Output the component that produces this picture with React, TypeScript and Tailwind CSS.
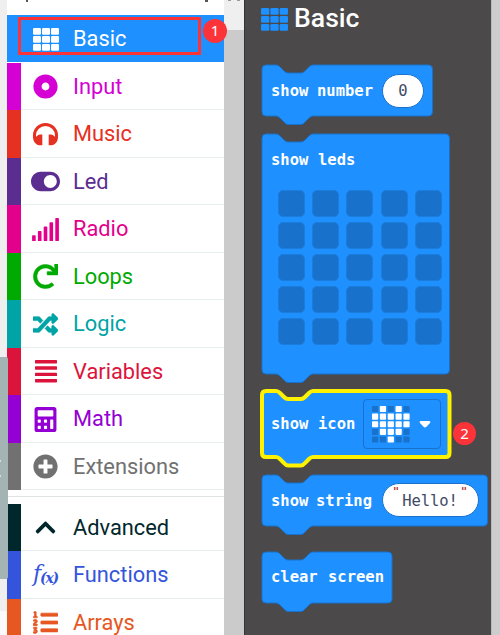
import React from "react";
import {
  FaDotCircle, FaToggleOn, FaSignal, FaRedo, FaRandom,
  FaCalculator, FaPlusCircle, FaChevronUp, FaListOl,
} from "react-icons/fa";

const mono = "font-['DejaVu_Sans_Mono',monospace]";

function GridIcon({ width, height }: { width: number; height: number }) {
  return (
    <svg width={width} height={height} viewBox="0 0 26 23" preserveAspectRatio="none" fill="currentColor">
      {[0, 1, 2].map((r) => [0, 1, 2].map((c) => (
        <rect key={`${r}${c}`} x={c * 9} y={r * 8} width="8" height="6.8" rx="1.2" />
      )))}
    </svg>
  );
}

function HeadphonesIcon() {
  return (
    <svg width="25" height="23" viewBox="0 0 25 23">
      <path d="M1.5 15V12.2a11 10.7 0 0 1 22 0V15" fill="none" stroke="currentColor" strokeWidth="3" />
      <path d="M9.3 11.5V22.3H7.5C4 22.3 1.2 20 .3 16.5L0 13.5H3.5Q5 11.5 7 11.5ZM15.7 11.5V22.3H17.5C21 22.3 23.8 20 24.7 16.5L25 13.5H21.5Q20 11.5 18 11.5Z" fill="currentColor" />
    </svg>
  );
}

function LinesIcon() {
  return (
    <svg width="22" height="23" viewBox="0 0 22 23" fill="currentColor">
      {[0, 6.3, 12.7, 19].map((y) => <rect key={y} y={y} width="22" height="3.4" rx="0.6" />)}
    </svg>
  );
}

function FunctionIcon() {
  return (
    <span className="relative -top-px block whitespace-nowrap font-['DejaVu_Serif',serif] italic leading-none tracking-[-1.2px]">
      <span className="text-[22px]">f</span>
      <span className="relative top-[2px] text-[14px] font-bold">(x)</span>
    </span>
  );
}

type Category = { label: string; text: string; bar: string; icon: React.ReactNode };

const categories: Category[] = [
  { label: "Input", text: "text-[#d400d4]", bar: "bg-[#d400d4]", icon: <FaDotCircle size={25} /> },
  { label: "Music", text: "text-[#e63022]", bar: "bg-[#e63022]", icon: <HeadphonesIcon /> },
  { label: "Led", text: "text-[#5c2d91]", bar: "bg-[#5c2d91]", icon: <FaToggleOn size={29} /> },
  { label: "Radio", text: "text-[#e3008c]", bar: "bg-[#e3008c]", icon: <FaSignal size={29} /> },
  { label: "Loops", text: "text-[#00aa00]", bar: "bg-[#00aa00]", icon: <FaRedo size={25} stroke="currentColor" strokeWidth={10} /> },
  { label: "Logic", text: "text-[#00a4a6]", bar: "bg-[#00a4a6]", icon: <FaRandom size={25} stroke="currentColor" strokeWidth={12} /> },
  { label: "Variables", text: "text-[#dc143c]", bar: "bg-[#dc143c]", icon: <LinesIcon /> },
  { label: "Math", text: "text-[#9400d3]", bar: "bg-[#9400d3]", icon: <FaCalculator size={25} /> },
  { label: "Extensions", text: "text-[#717171]", bar: "bg-[#717171]", icon: <FaPlusCircle size={25} /> },
];

const advanced: Category[] = [
  { label: "Advanced", text: "text-[#00272b]", bar: "bg-[#00272b]", icon: <FaChevronUp size={23} /> },
  { label: "Functions", text: "text-[#3455db]", bar: "bg-[#3455db]", icon: <FunctionIcon /> },
  { label: "Arrays", text: "text-[#e65722]", bar: "bg-[#e65722]", icon: <FaListOl size={25} stroke="currentColor" strokeWidth={14} /> },
];

function Row({ item }: { item: Category }) {
  return (
    <div className={`flex h-[47.5px] shrink-0 ${item.text}`}>
      <div className={`w-[14px] shrink-0 ${item.bar}`} />
      <div className="ml-px flex flex-1 items-center border-b border-[#e9eeef] pt-[2px]">
        <span className="flex w-[47px] items-center justify-center">{item.icon}</span>
        <span className="ml-[4px] text-[21.8px]">{item.label}</span>
      </div>
    </div>
  );
}

function Badge({ n, place }: { n: number; place: string }) {
  return (
    <span className={`absolute flex size-[23.5px] items-center justify-center rounded-full bg-[#fc3439] font-['Noto_Sans',sans-serif] text-[15px] leading-none text-white ${place}`}>
      {n}
    </span>
  );
}

function Block({ w, h, size, selected, children }: {
  w: number; h: number; size: string; selected?: boolean; children: React.ReactNode;
}) {
  const d = `M0 4Q0 0 4 0H14C16 0 17 1 18 2L22 6Q24 8 26 8H39Q41 8 43 6L47 2Q49 0 51 0H${w - 4}Q${w} 0 ${w} 4V${h - 4}Q${w} ${h} ${w - 4} ${h}H51Q49 ${h} 47 ${h + 2}L43 ${h + 6}Q41 ${h + 8.5} 39 ${h + 8.5}H26Q24 ${h + 8.5} 22 ${h + 6}L18 ${h + 2}Q16 ${h} 14 ${h}H4Q0 ${h} 0 ${h - 4}Z`;
  return (
    <div className={`relative shrink-0 ${size}`}>
      <svg className="absolute left-0 top-0 overflow-visible" width={w} height={h}>
        <path d={d} fill="#1e90ff" stroke={selected ? "#fff200" : "#1872cc"} strokeWidth={selected ? 4 : 1} />
      </svg>
      <div className={`relative h-full text-[15.5px] font-bold leading-5 text-white ${mono}`}>{children}</div>
    </div>
  );
}

const leds = Array.from({ length: 25 }, (_, i) => i);
const heart = [".#.#.", "#####", "#####", ".###.", "..#.."];

function HeartIcon() {
  return (
    <svg width="38" height="37" viewBox="0 0 38 37">
      {heart.map((row, y) => row.split("").map((cell, x) => (
        <rect key={`${x}-${y}`} x={x * 7.85} y={y * 7.6} width="6.2" height="6.1" rx="0.8" fill={cell === "#" ? "#fff" : "#1872cc"} />
      )))}
    </svg>
  );
}

export default function App() {
  return (
    <div className="relative flex h-[635px] w-[500px] overflow-hidden bg-white font-[Roboto,sans-serif]">
      <div className="relative z-10 flex w-[7px] shrink-0 flex-col">
        <div className="h-[357px] bg-[#efefef]" />
        <div className="flex h-[222px] w-[8px] flex-col rounded-r-[2px] bg-[#a4b3b4] pt-[103px]">
          <span className="h-[2px] w-px bg-[#d5dddd]" />
          <span className="mt-[13px] h-[2px] w-px bg-[#d5dddd]" />
        </div>
        <div className="h-[32px] bg-[#efefef]" />
        <div className="flex-1 bg-[#fafafc]" />
      </div>

      <div className="flex w-[217px] shrink-0 flex-col">
        <div className="flex h-[15px] shrink-0 items-start justify-between pl-[19px] pr-[16px]">
          <span className="h-[2px] w-[2px] bg-[#555]" />
          <span className="h-[2px] w-[3px] bg-[#555]" />
        </div>
        <div className="flex h-[47px] shrink-0 items-center bg-[#1e90ff] pt-px text-white">
          <span className="ml-[15px] flex w-[47px] justify-center"><GridIcon width={26} height={23} /></span>
          <span className="ml-[4px] text-[21.8px]">Basic</span>
        </div>
        <div className="h-[0.7px] shrink-0" />
        {categories.map((c) => <Row key={c.label} item={c} />)}
        <div className="mb-[6.5px] mt-[6px] h-px shrink-0 bg-[#dfe3e4]" />
        {advanced.map((c) => <Row key={c.label} item={c} />)}
      </div>

      <div className="flex w-[20px] shrink-0 flex-col bg-[#efefef]">
        <div className="flex h-[30px] justify-center gap-[6px]">
          <span className="h-px w-[3px] bg-[#999]" />
          <span className="h-px w-[3px] bg-[#999]" />
        </div>
        <div className="flex-1 bg-[#cbcbcb]" />
      </div>

      <div className="flex w-[247px] shrink-0 flex-col border-l border-[#333] bg-[#4b4949] pl-[17px]">
        <div className="flex h-[65px] shrink-0 items-start pt-[5px] text-[#1e90ff]">
          <span className="-ml-px mt-[3px]"><GridIcon width={27} height={23} /></span>
          <span className="-mt-px ml-[6px] text-[26.6px] font-medium leading-[27px] text-white">Basic</span>
        </div>

        <Block w={170.5} h={51} size="h-[51px] w-[171px]">
          <div className="flex h-full items-center pl-[9px]">
            <span className="w-[46px]">show</span>
            <span className="w-[65px]">number</span>
            <span className="flex h-[34px] w-[42px] items-center justify-center rounded-[17px] border border-[#1872cc] bg-white font-normal text-[#434a66]">0</span>
          </div>
        </Block>

        <div className="h-[18px] shrink-0" />
        <Block w={187.5} h={240} size="h-[240px] w-[188px]">
          <div className="pl-[9px] pt-[16px]">
            <div className="flex"><span className="w-[47px]">show</span><span>leds</span></div>
            <div className="ml-[7px] mt-[20px] grid w-[164px] grid-cols-5 gap-x-[7px] gap-y-[5px]">
              {leds.map((i) => (
                <span key={i} className="size-[27px] rounded-[5px] border border-[#1c7cda] bg-[#1872cc]" />
              ))}
            </div>
          </div>
        </Block>

        <div className="h-[17px] shrink-0" />
        <Block w={187.5} h={66} size="h-[66px] w-[188px]" selected>
          <div className="flex h-full items-center pl-[9px]">
            <span className="w-[47px]">show</span>
            <span className="w-[45px]">icon</span>
            <div className="flex h-[50px] w-[78px] items-center rounded-[4px] border border-[#1872cc] pl-[8px]">
              <HeartIcon />
              <svg className="ml-[9px]" width="12" height="9" viewBox="0 0 12 9">
                <path d="M2 1H10Q12 1 11 3L7.5 6.8Q6 8.4 4.5 6.8L1 3Q0 1 2 1Z" fill="white" />
              </svg>
            </div>
          </div>
        </Block>

        <div className="h-[17.5px] shrink-0" />
        <Block w={225.5} h={51} size="h-[51px] w-[226px]">
          <div className="flex h-full items-center pl-[9px] pt-px">
            <span className="w-[45px]">show</span>
            <span className="w-[66px]">string</span>
            <span className="-mt-px flex h-[34px] w-[97px] items-center rounded-full border border-[#1872cc] bg-white pl-[10px] font-normal text-[#434a66]">
              <span className="-mt-[16px] w-[7px] text-[10px] font-bold text-[#b32d2d]">"</span>
              <span className="w-[60px] pt-px text-center text-[15.5px] tracking-[-0.1px]">Hello!</span>
              <span className="-mt-[16px] ml-px w-[7px] text-[10px] font-bold text-[#b32d2d]">"</span>
            </span>
          </div>
        </Block>

        <div className="h-[26px] shrink-0" />
        <Block w={130} h={51} size="h-[51px] w-[130px]">
          <div className="flex h-full items-center pl-[9px]">
            <span className="w-[57px]">clear</span>
            <span>screen</span>
          </div>
        </Block>
      </div>
      <div className="flex-1 border-l border-[#bbb] bg-[#cdcdcd]" />

      <div className="absolute left-[18px] top-[17px] h-[38px] w-[183px] border-[3px] border-[#fc3439]" />
      <Badge n={1} place="left-[203.3px] top-[19px]" />
      <Badge n={2} place="left-[452.8px] top-[421.5px]" />
    </div>
  );
}
